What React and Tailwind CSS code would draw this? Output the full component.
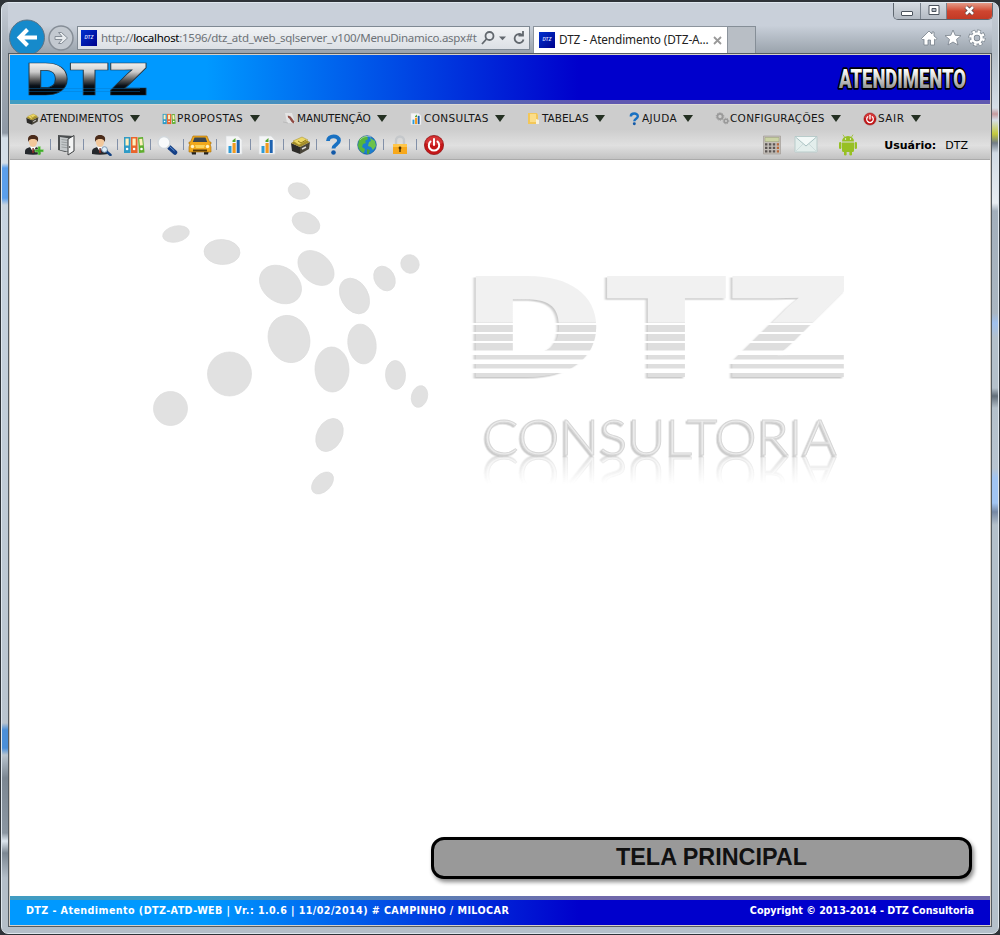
import React from "react";

function Person({ children }) {
  return (
    <svg width="22" height="22" viewBox="0 0 22 22">
      <path d="M2 20v-2.500c0-3 3-4.500 8-4.500s8 1.500 8 4.500V20q-8 1.500-16 0z" fill="#24282c" />
      <path d="M7 13l3 5 3-5z" fill="#fff" />
      <path d="M9.500 14h1.200l.5 5h-2.200z" fill="#7a2a24" />
      <ellipse cx="10" cy="8" rx="4" ry="5" fill="#f2c79a" />
      <path d="M5.300 8C4.300 3 6 1 10 1s6.200 2 4.700 7c-1-3-2.700-3-4.700-3S6.300 5 5.300 8z" fill="#4a2b1a" />
      {children}
    </svg>
  );
}
const UserAdd = () => (
  <Person><path d="M15 12.500h2.500v3h3V18h-3v3H15v-3h-3v-2.500h3z" fill="#3fae2a" stroke="#a9dc98" strokeWidth=".5" /></Person>
);
const UserFind = () => (
  <Person>
    <path d="M16.500 17.500l4 3.500" stroke="#12407f" strokeWidth="2.500" strokeLinecap="round" />
    <circle cx="14.500" cy="15.500" r="2.800" fill="#dceefa" stroke="#7f99b5" />
  </Person>
);
const Door = () => (
  <svg width="22" height="22" viewBox="0 0 22 22">
    <path d="M2 1l16 1v15l-9 1L2 16z" fill="#4c4f51" />
    <path d="M4 3l10 1.500V18L4 16z" fill="#c4c8ca" />
    <path d="M5.500 5.500l6 .8M5.500 8l6 .8M5.500 10.500l6 .8M5.500 13l6 .8" stroke="#8f9496" strokeWidth=".8" />
    <path d="M12 5l6-3.500V17l-6 4z" fill="#f4f5f5" stroke="#3a3d3f" />
    <circle cx="13.600" cy="13" r=".8" fill="#222" />
  </svg>
);
const Binders = ({ size = 22 }) => (
  <svg width={size} height={size} viewBox="0 0 22 22">
    <path d="M1 3h6.500v16H1z" fill="#2f9bc6" /><path d="M8 3h6.500v16H8z" fill="#e9642c" />
    <path d="M15 3.500l5-.5 1.500 15.500-5.500.5z" fill="#5fae2e" />
    <path d="M2.500 4.500h3.200v7H2.500zM9.500 4.500h3.200v7H9.500zM16.200 5l3-.3.7 6.500-3 .4z" fill="#fff0bd" />
    <circle cx="4.100" cy="15" r="1.300" fill="#fff" /><circle cx="11.100" cy="15" r="1.300" fill="#fff" /><circle cx="18.500" cy="15" r="1.300" fill="#fff" />
  </svg>
);
const Lens = () => (
  <svg width="22" height="22" viewBox="0 0 22 22">
    <path d="M13.500 13.500l5.500 5" stroke="#143f86" strokeWidth="4.500" strokeLinecap="round" />
    <path d="M13.500 12.500l5 4.500" stroke="#5f95d6" strokeWidth="1" />
    <circle cx="8" cy="8.500" r="6" fill="#f8fafb" stroke="#d3d8dc" strokeWidth="1.500" />
  </svg>
);
const Car = () => (
  <svg width="24" height="22" viewBox="0 0 24 22">
    <path d="M3 16h5v4.500H4zM16 16h5l-1 4.500h-4z" fill="#222" />
    <path d="M5 2h14l2.500 6H23v2h-1l1 3v5H1v-5l1-3H1V8h1.500z" fill="#f0a81c" stroke="#a86b08" strokeWidth=".6" />
    <path d="M6.500 3.500h11l1.700 4.500H4.800z" fill="#3b4650" />
    <path d="M7 11h10l-1 3H8z" fill="#fbd35a" /><path d="M5 15.500h14v2H5z" fill="#5a3a06" />
    <circle cx="4.500" cy="12.500" r="1.700" fill="#fff3c2" /><circle cx="19.500" cy="12.500" r="1.700" fill="#fff3c2" />
  </svg>
);
const Chart = ({ size = 22 }) => (
  <svg width={size} height={size} viewBox="0 0 22 22">
    <path d="M3 2h12l4 4v14H3z" fill="#f4f5f6" stroke="#d9dcde" strokeWidth=".7" />
    <path d="M5.500 12h3v7h-3z" fill="#2e9bd6" /><path d="M9.500 9h3.200v10H9.500z" fill="#f29a1f" /><path d="M13.700 6h3v13h-3z" fill="#1d62b0" />
    <path d="M9.500 6.500l3-2.500v4h-3z" fill="#53a52f" />
  </svg>
);
const Box = ({ size = 22 }) => (
  <svg width={size} height={size} viewBox="0 0 22 22">
    <path d="M2 9l9 4v7l-8-3z" fill="#2c2b28" /><path d="M11 13l10-5-1 7-9 5z" fill="#49453a" />
    <path d="M2 9l10-5 9 4-10 5z" fill="#a38c28" />
    <path d="M4 7l9-4 6 3-9 5z" fill="#ecd765" stroke="#a38c28" strokeWidth=".5" />
    <path d="M9 7l3 2 5-3" stroke="#8d781a" fill="none" />
    <path d="M13 15l4-2" stroke="#ddd" strokeWidth="1.500" />
  </svg>
);
const Question = ({ size = 22 }) => (
  <svg width={size} height={size} viewBox="0 0 22 22">
    <path d="M6 7c0-6 11-6 11-.5 0 4-5.500 4-5.500 8" fill="none" stroke="#1971c2" strokeWidth="3.800" />
    <circle cx="11.500" cy="18.500" r="2.300" fill="#1259a8" />
  </svg>
);
const Globe = () => (
  <svg width="22" height="22" viewBox="0 0 22 22">
    <circle cx="11" cy="11" r="9.300" fill="#1c7ed0" stroke="#0c4d91" strokeWidth=".6" />
    <path d="M3 6c2-3 5-4 8-4l1 3-3 2 1 2-3 1-1 3 3 2-1 4c-3-1-6-4-6-8z" fill="#58b53c" />
    <path d="M14 4l5 3 1 5-3 4-2-3-3-1 1-4 2-1z" fill="#6cc24a" />
    <path d="M11 15l3 1-1 4-2 0z" fill="#4aa336" />
    <path d="M4 6c3-4 8-4 11-3" fill="none" stroke="#fff" strokeOpacity=".4" />
  </svg>
);
const Lock = () => (
  <svg width="22" height="22" viewBox="0 0 22 22">
    <path d="M7 11V6.500a4 4 0 0 1 8 0V11" fill="none" stroke="#c5c8cb" strokeWidth="2.400" />
    <path d="M4 10h14v10H4z" fill="#f7a81b" /><path d="M4 10h14v3H4z" fill="#ffc64a" />
    <circle cx="11" cy="14" r="1.400" fill="#4b3204" /><path d="M10.300 14h1.400v4h-1.400z" fill="#4b3204" />
  </svg>
);
const Power = ({ size = 22 }) => (
  <svg width={size} height={size} viewBox="0 0 22 22">
    <circle cx="11" cy="11" r="9.600" fill="#c41718" stroke="#8c0d10" strokeWidth=".7" />
    <path d="M2.300 9a9 9 0 0 1 17.400 0c-6 3-11.400 3-17.400 0z" fill="#e0484a" fillOpacity=".6" />
    <path d="M7.500 7.500a5.200 5.200 0 1 0 7 0" fill="none" stroke="#fff" strokeWidth="2" strokeLinecap="round" />
    <path d="M11 5V11" stroke="#fff" strokeWidth="2" strokeLinecap="round" />
  </svg>
);
const Pen = () => (
  <svg width="15" height="15" viewBox="0 0 15 15">
    <path d="M3 2h7l3 10H5z" fill="#e4e4e4" /><path d="M6 6c3-1 3 4 6 5.500" stroke="#8f4a42" strokeWidth="2.400" fill="none" />
    <path d="M1 11l5 1" stroke="#bbb" />
  </svg>
);
const Folder = () => (
  <svg width="15" height="15" viewBox="0 0 15 15">
    <path d="M1 2h9l1 2v9H1z" fill="#f3c759" /><path d="M3 3h6v8H3z" fill="#fbdd88" /><path d="M9 8l3 1v4H9z" fill="#f8f1dc" />
  </svg>
);
const Gears = () => (
  <svg width="15" height="15" viewBox="0 0 15 15" fill="none" stroke="#999">
    <circle cx="5" cy="5.500" r="2.600" strokeWidth="1.800" /><circle cx="5" cy="5.500" r="3.800" strokeDasharray="1.200 1.200" />
    <circle cx="11" cy="10" r="1.800" strokeWidth="1.500" /><circle cx="11" cy="10" r="2.800" strokeDasharray="1 1" />
  </svg>
);
const Calculator = () => (
  <svg width="20" height="20" viewBox="0 0 20 20">
    <path d="M1.500 1h17v18h-17z" fill="#c4bfb9" stroke="#a39e98" strokeWidth=".7" /><path d="M3 2.500h14v4H3z" fill="#cbd3a5" stroke="#98a075" strokeWidth=".5" />
    <path d="M3 9.300h11M3 12.800h11M3 16.300h11" stroke="#5b5654" strokeWidth="2.200" strokeDasharray="2.400 1.500" />
    <path d="M14.800 8.200H17v2.200h-2.200zM14.800 11.700H17v2.200h-2.200zM14.800 15.200H17v2.200h-2.200z" fill="#b86a3c" />
  </svg>
);
const Mail = () => (
  <svg width="24" height="17" viewBox="0 0 24 17">
    <path d="M1 .5h22v15.500H1z" fill="#e3eeec" stroke="#b9cccb" />
    <path d="M1 16l8-8M23 16l-8-8" stroke="#cddcdc" fill="none" />
    <path d="M1.500 1l10.500 9L22.500 1" fill="#f3f9f8" stroke="#a9c2c2" />
  </svg>
);
const Android = () => (
  <svg width="20" height="22" viewBox="0 0 20 22" fill="#97c024">
    <path d="M4 7.500a6 5.500 0 0 1 12 0zM4 8.500h12v8a1.500 1.500 0 0 1-1.500 1.500h-9A1.500 1.500 0 0 1 4 16.500z" />
    <rect x="1" y="8" width="2.400" height="7" rx="1.200" /><rect x="16.600" y="8" width="2.400" height="7" rx="1.200" />
    <rect x="6" y="15.500" width="2.600" height="6" rx="1.300" /><rect x="11.400" y="15.500" width="2.600" height="6" rx="1.300" />
    <path d="M6.500 3L5 .7M13.500 3L15 .7" stroke="#97c024" strokeWidth=".8" />
    <circle cx="7.500" cy="5" r=".7" fill="#fff" /><circle cx="12.500" cy="5" r=".7" fill="#fff" />
  </svg>
);

const menu = [
  ["ATENDIMENTOS", <Box size={14} />, "w-[115px]", ""],
  ["PROPOSTAS", <Binders size={14} />, "w-[98px]", "tracking-[0.38px]"],
  ["MANUTENÇÃO", <Pen />, "w-[105px]", "tracking-[-0.17px]"],
  ["CONSULTAS", <Chart size={14} />, "w-[96px]", "tracking-[0.36px]"],
  ["TABELAS", <Folder />, "w-[78px]", ""],
  ["AJUDA", <Question size={14} />, "w-[66px]", "tracking-[0.4px]"],
  ["CONFIGURAÇÕES", <Gears />, "w-[126px]", "tracking-[0.28px]"],
  ["SAIR", <Power size={14} />, "w-[58px]", "tracking-[0.5px]"],
];
const tools = [<UserAdd />, <Door />, <UserFind />, <Binders />, <Lens />, <Car />, <Chart />, <Chart />, <Box />, <Question />, <Globe />, <Lock />, <Power />];

const Favicon = () => (
  <span className="flex h-4 w-4 shrink-0 items-center justify-center bg-linear-to-br from-[#0030d0] to-[#00008c] font-['Inter',sans-serif] text-[4.500px] font-bold text-[#d5dcff] italic">DTZ</span>
);

function HeaderLogo() {
  return (
    <svg className="shrink-0 overflow-visible" width="126" height="44" viewBox="0 0 126 44">
      <defs>
        <linearGradient id="chrome" x1="0" y1="6" x2="0" y2="39" gradientUnits="userSpaceOnUse">
          <stop offset="0" stopColor="#f4f4f4" /><stop offset=".3" stopColor="#ccc" /><stop offset=".55" stopColor="#555" /><stop offset=".72" stopColor="#081018" /><stop offset="1" stopColor="#000" />
        </linearGradient>
      </defs>
      <g transform="scale(1.350 1)">
        <text x="3.200 34.600 63.500" y="39" fontFamily="Inter" fontWeight="900" fontSize="44" fill="url(#chrome)" stroke="#24323c" strokeWidth=".7">DTZ</text>
      </g>
      <path d="M6 32.500h112M6 35.500h112" stroke="#0878c8" strokeWidth=".7" strokeOpacity=".6" />
    </svg>
  );
}

function Title() {
  return (
    <svg className="shrink-0 overflow-visible" width="136" height="36" viewBox="0 0 136 36">
      <defs>
        <linearGradient id="silver" x1="0" y1="0" x2="0" y2="1"><stop offset=".2" stopColor="#fff" /><stop offset=".85" stopColor="#8c8c8c" /></linearGradient>
      </defs>
      <text x="5" y="28" textLength="127" lengthAdjust="spacingAndGlyphs" fontFamily="Roboto" fontWeight="900" fontSize="26" fill="url(#silver)" stroke="#000" strokeWidth="3.500" strokeLinejoin="round" paintOrder="stroke">ATENDIMENTO</text>
    </svg>
  );
}

const dots = [
  [299, 191, 11, 8, 15], [306, 223, 14.500, 10, 25], [176, 234, 13.500, 8, -12], [222, 252, 18, 12.500, 3],
  [280.500, 284.500, 22.500, 17.500, 35], [316, 268, 20.500, 14.500, 42], [354.500, 296, 19, 13.500, 60], [384.500, 278.500, 13, 10, 60],
  [410, 264, 9.500, 9, 50], [289, 339, 24, 20.500, 70], [362, 344, 20, 14, 80], [332, 369.500, 22.500, 17, 88],
  [395.500, 375, 14.500, 10, 88], [419.500, 396.500, 11, 8, 105], [229.500, 374, 22, 22, 0], [170.500, 408.500, 17, 17, 0],
  [329.500, 435, 17.500, 12.500, 118], [322.500, 483, 13, 8.500, 135],
];
const cuts = [323, 332, 341, 350.500, 359.500, 368.500];

function Watermark() {
  return (
    <svg className="block" width="740" height="340" viewBox="140 170 740 340">
      <defs>
        <mask id="stripes" maskUnits="userSpaceOnUse" x="140" y="170" width="740" height="340">
          <rect x="140" y="170" width="740" height="340" fill="#fff" />
          {cuts.map((y, i) => <rect key={y} x="140" y={y} width="740" height={i < 3 ? 2 : 4.500} fill="#000" />)}
        </mask>
        <linearGradient id="face" x1="0" y1="276" x2="0" y2="377" gradientUnits="userSpaceOnUse">
          <stop offset=".45" stopColor="#f1f1f1" /><stop offset=".47" stopColor="#dedede" />
        </linearGradient>
        <linearGradient id="fade" x1="0" y1="456" x2="0" y2="484" gradientUnits="userSpaceOnUse">
          <stop offset="0" stopColor="#fff" stopOpacity=".6" /><stop offset="1" stopColor="#fff" stopOpacity="0" />
        </linearGradient>
        <mask id="mirror" maskUnits="userSpaceOnUse" x="140" y="456" width="740" height="40"><rect x="140" y="456" width="740" height="40" fill="url(#fade)" /></mask>
        <filter id="relief" x="-5%" y="-5%" width="110%" height="115%"><feDropShadow dx="-1.500" dy="1.500" stdDeviation=".7" floodColor="#bdbdbd" floodOpacity=".8" /></filter>
      </defs>
      {dots.map(([x, y, rx, ry, a]) => (
        <ellipse key={x} cx={x} cy={y} rx={rx} ry={ry} transform={`rotate(${a} ${x} ${y})`} fill="#e1e1e1" stroke="#dcdcdc" strokeWidth=".7" />
      ))}
      <g mask="url(#stripes)">
        <g filter="url(#relief)" transform="scale(1.350 1)">
          <text x="346 446 535.500" y="377" fontFamily="Inter" fontWeight="900" fontSize="139" fill="url(#face)">DTZ</text>
        </g>
      </g>
      <text id="sub" x="483" y="455" textLength="354" lengthAdjust="spacingAndGlyphs" fontFamily="Lato" fontWeight="300" fontSize="50" fill="#ebebeb" stroke="#d6d6d6" strokeWidth=".9" filter="url(#relief)">CONSULTORIA</text>
      <g mask="url(#mirror)"><use href="#sub" transform="translate(0 912) scale(1 -1)" /></g>
    </svg>
  );
}

export default function App() {
  return (
    <div className="flex h-[935px] w-[1000px] flex-col overflow-hidden bg-[#2e3338] font-['DejaVu_Sans',sans-serif]">
      <div className="mx-px mt-[2px] mb-px flex grow flex-col rounded-[7px] border border-[#dfe7ee] bg-[linear-gradient(180deg,#c5ccd6_0,#a3acb5_50px,#8f99a5_130px,#d5dfe8_135px,#d5dfe8_160px,#5b9fec_165px,#5b9fec_195px,#c8d4e0_202px,#b9c4ce_720px,#4b8fd8_727px,#4b8fd8_745px,#b9c4ce_752px,#7c8792_775px,#8b96a1_830px,#dde6ee_838px,#7c8792_850px,#b4bec8_875px),linear-gradient(180deg,#c5ccd6_0,#b5bec7_50px,#d5dee7_105px,#c69a9d_111px,#d5dee7_117px,#c3c93c_131px,#727d87_140px,#d0dae3_150px,#e8edf2_200px,#a3afbb_208px,#aab6c1_310px,#9fc0ee_320px,#b4c0ca_335px,#b4c0ca_385px,#626e79_393px,#b4c0ca_405px,#b8c4d0_465px,#a1c4f2_475px,#a1c4f2_500px,#7688a4_509px,#b4c0ca_522px)] bg-[size:50%_100%] bg-[position:left,right] bg-no-repeat px-[6px] pb-[6px]">
        <header className="flex h-[50px] shrink-0 flex-col bg-linear-to-b from-[#c9d0da] from-45% to-[#9aa3ac]">
          <div className="flex h-[16px] justify-end">
            <div className="mr-[-1px] flex h-[17px] w-[100px] overflow-hidden rounded-b-[5px] border border-t-0 border-[#5f6770]">
              <div className="flex w-[27px] items-center justify-center border-r border-[#79828c] bg-linear-to-b from-[#d5dae0] to-[#b3bac3]">
                <span className="mt-1 h-[5px] w-[12px] rounded-[1px] border border-[#4b535d] bg-white" />
              </div>
              <div className="flex w-[26px] items-center justify-center border-r border-[#79828c] bg-linear-to-b from-[#d5dae0] to-[#b3bac3]">
                <svg className="mb-0.5" width="12" height="10" viewBox="0 0 12 10"><path d="M1 .5h10v9H1z" fill="#fff" stroke="#4b535d" /><path d="M4 3.500h4v3H4z" fill="#b3bac3" stroke="#4b535d" /></svg>
              </div>
              <div className="flex grow items-center justify-center bg-linear-to-b from-[#e39a87] via-[#cf4630] to-[#c23a25]">
                <svg className="mb-0.5" width="13" height="11" viewBox="0 0 13 11"><path d="M3 2l7 7M10 2L3 9" stroke="#5c4545" strokeWidth="4.200" /><path d="M3 2l7 7M10 2L3 9" stroke="#fff" strokeWidth="2.500" /></svg>
              </div>
            </div>
          </div>
          <div className="flex h-[34px] items-start font-['Noto_Sans',sans-serif] text-[12px]">
            <svg className="shrink-0" width="69" height="35" viewBox="8 18 69 35">
              <circle cx="27" cy="36.500" r="17.500" fill="#168acb" stroke="#5f7485" />
              <path d="M37 36.500H20M27.500 28.500l-8 8 8 8" fill="none" stroke="#fff" strokeWidth="4" />
              <circle cx="61" cy="37" r="12" fill="#c3c9d0" stroke="#858d96" strokeWidth="1.500" />
              <path d="M55 35.500h7l-3.500-4h3l6 5.500-6 5.500h-3l3.500-4h-7z" fill="#e8ecef" stroke="#858d96" />
            </svg>
            <div className="mt-[7px] flex h-[24px] w-[453px] shrink-0 items-center border border-[#7f8993] bg-linear-to-b from-[#f1f3f5] to-[#dce0e5] pl-[3px] text-[#6d7277]">
              <Favicon />
              <span className="ml-[4px] w-[377px] text-[11.500px] tracking-[-0.28px] whitespace-nowrap">http://<span className="text-black">localhost</span>:1596/dtz_atd_web_sqlserver_v100/MenuDinamico.aspx#t</span>
              <svg className="ml-[3px] shrink-0" width="46" height="16" viewBox="0 0 46 16" fill="none" stroke="#62686e" strokeWidth="1.800">
                <circle cx="8.500" cy="6" r="4" /><path d="M5.500 9L1 14" /><path d="M18 6.500h7l-3.500 3.700z" fill="#62686e" stroke="none" />
                <path d="M41 5a4.500 4.500 0 1 0 1.500 4.500M37.500 5.500H42V1" />
              </svg>
            </div>
            <div className="mt-[7px] ml-[3px] flex h-[27px] w-[195px] shrink-0 items-center border border-b-0 border-[#8c949d] bg-white pl-[5px] text-[#222]">
              <Favicon />
              <span className="ml-[4px] w-[152px] text-[11.800px] tracking-[-0.12px] whitespace-nowrap">DTZ - Atendimento (DTZ-A...</span>
              <svg className="ml-[2px] shrink-0" width="9" height="9" viewBox="0 0 9 9"><path d="M1 1l7 7M8 1L1 8" stroke="#999" strokeWidth="1.800" /></svg>
            </div>
            <div className="mt-[7px] h-[27px] w-[28px] border border-b-0 border-l-0 border-[#858e97] bg-[#b8bec5]" />
            <svg className="mt-[9px] mr-[6px] ml-auto shrink-0" width="66" height="20" viewBox="0 0 66 20" fill="#fff" stroke="#77808a" strokeWidth=".8">
              <path d="M1.500 10.500L9 3l3 3V4h2v4l3 2.500-1.500 1.500-1-.8V17h-4v-5H8v5H4v-5.800L3 12z" />
              <path d="M33 2l2.200 5.300 5.800.4-4.500 3.700 1.500 5.600-5-3-5 3 1.500-5.600L25 7.700l5.800-.4z" />
              <g fill="none">
                <circle cx="57" cy="10" r="6.600" stroke="#77808a" strokeWidth="4" strokeDasharray="3.400 1.780" />
                <circle cx="57" cy="10" r="4.500" stroke="#77808a" strokeWidth="4" />
                <circle cx="57" cy="10" r="6.600" stroke="#fff" strokeWidth="2.600" strokeDasharray="2.600 2.580" strokeDashoffset="-.4" />
                <circle cx="57" cy="10" r="4.500" stroke="#fff" strokeWidth="2.600" />
              </g>
            </svg>
          </div>
        </header>

        <div className="flex grow flex-col border border-[#555c62] bg-[#d6d0c8] p-px">
          <div className="flex h-[45px] shrink-0 items-center justify-between bg-[linear-gradient(90deg,#0099ff_0,#0099ff_20%,#0000cc_58%)] pr-[20px] pl-[12px]">
            <HeaderLogo /><Title />
          </div>
          <div className="h-[4px] shrink-0 bg-[linear-gradient(90deg,#419cc2_0,#419cc2_20%,#6058b0_58%)]" />
          <div className="h-[56px] shrink-0 border-t border-b border-t-[#dedbd6] border-b-[#aaa] bg-linear-to-b from-[#cdcdcd] from-45% via-[#e0e0e0] via-75% to-[#c2c2c2]">
            <nav className="flex h-[27px] items-center gap-[22px] pl-[15px] text-[10.500px] text-[#151515]">
              {menu.map(([label, icon, width, tracking]) => (
                <div key={label} className={`flex shrink-0 items-center ${width}`}>
                  <span className="w-[15px] shrink-0">{icon}</span>
                  <span className={`whitespace-nowrap ${tracking}`}>{label}</span>
                  <svg className="ml-auto shrink-0" width="10" height="7" viewBox="0 0 10 7"><path d="M0 0h10L5 7z" fill="#243022" /></svg>
                </div>
              ))}
            </nav>
            <div className="flex h-[25px] items-center pl-[8px]">
              {tools.map((icon, i) => (
                <div key={i} className="flex w-[33.250px] shrink-0 items-center justify-center">
                  <span className="flex w-[32px] justify-center">{icon}</span>
                  {i < 12 && <span className="h-[11px] w-px bg-[#8290a8]" />}
                </div>
              ))}
              <div className="ml-auto flex items-center pr-[22px] text-[11px] text-black">
                <Calculator /><span className="ml-[12px]"><Mail /></span><span className="ml-[20px]"><Android /></span>
                <b className="mt-[3px] ml-[26px] w-[61px]">Usuário:</b><span className="mt-[3px]">DTZ</span>
              </div>
            </div>
          </div>

          <main className="flex grow flex-col bg-white">
            <div className="mt-[10px] ml-[130px]"><Watermark /></div>
            <div className="mt-auto mr-[18px] mb-[17px] flex h-[42px] w-[541px] items-center justify-center self-end rounded-[13px] border-[3px] border-black bg-[#999] pl-5 font-['Liberation_Sans',sans-serif] text-[23.400px] font-bold text-[#111] shadow-[2px_3px_4px_#888]">
              TELA PRINCIPAL
            </div>
          </main>

          <div className="h-[4px] shrink-0 bg-[linear-gradient(90deg,#419cc2_0,#419cc2_20%,#7068aa_60%)]" />
          <footer className="flex h-[25px] shrink-0 items-center justify-between bg-[linear-gradient(90deg,#0099ff_0,#0099ff_20%,#0000cc_58%)] px-[16px] pb-[2px] text-[9.600px] font-bold text-white">
            <span className="tracking-[0.41px]">DTZ - Atendimento (DTZ-ATD-WEB | Vr.: 1.0.6 | 11/02/2014) # CAMPINHO / MILOCAR</span>
            <span>Copyright © 2013-2014 - DTZ Consultoria</span>
          </footer>
        </div>
      </div>
    </div>
  );
}
